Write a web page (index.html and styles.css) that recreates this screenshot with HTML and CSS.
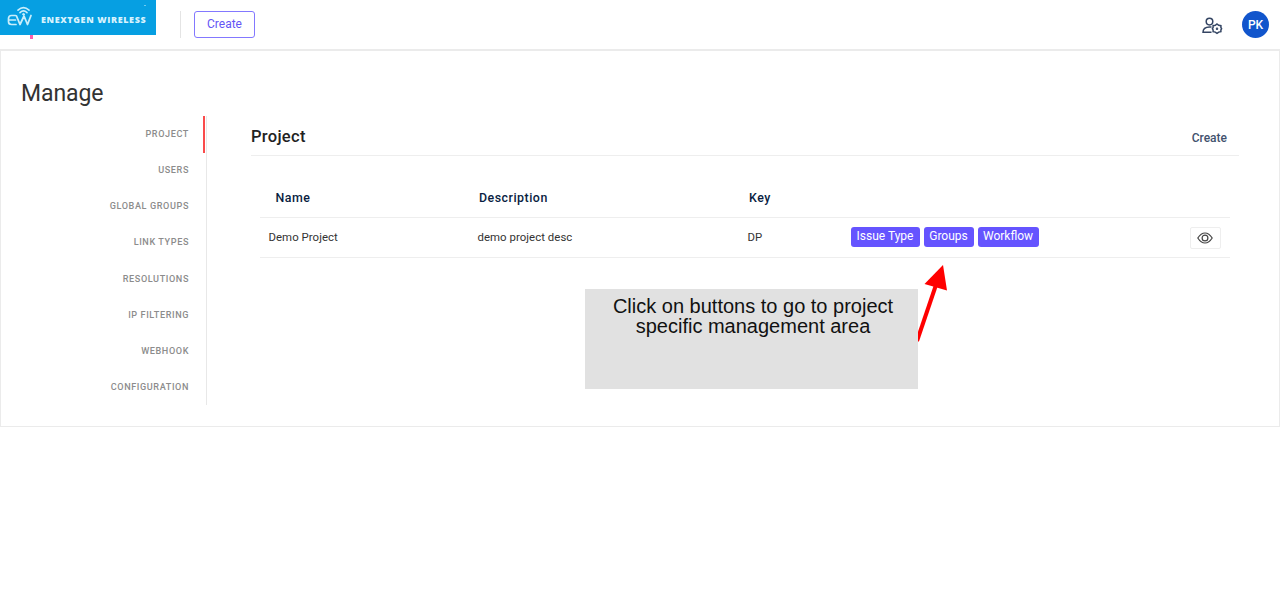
FILE: index.html
```html
<!DOCTYPE html>
<html lang="en">
<head>
<meta charset="utf-8">
<title>Manage projects</title>
<link rel="stylesheet" href="styles.css">
</head>
<body>
<header class="topbar">
  <div class="brand">
    <svg class="brand-mark" width="28" height="22" viewBox="0 0 28 22" fill="none" stroke="#c9eefb" stroke-linecap="round" stroke-linejoin="round">
      <path stroke-width="1.7" d="M8.500 9.500H4.500Q1.500 9.500 1.500 12.500V15.500Q1.500 18.500 4.500 18.500H9M1.500 14H8.500"/>
      <path stroke-width="1.8" d="M9.500 10L13 18.500L17 10L20.500 18.500L24 9.500"/>
      <path stroke-width="1.6" d="M11 4.200Q16.500 -.8 22 4.200M13 6.600Q16.500 3.200 20 6.600"/>
      <circle cx="16.500" cy="8.300" r=".9" fill="#c9eefb"/>
    </svg>
    <span class="brand-name">ENEXTGEN WIRELESS</span>
    <i class="brand-dot"></i>
    <i class="brand-tail"></i>
  </div>
  <div class="divider"></div>
  <button class="create-btn">Create</button>
  <div class="tools">
    <svg class="user-cog" width="22" height="18" viewBox="0 0 22 18" fill="none" stroke="#344563" stroke-width="1.5">
      <circle cx="7.500" cy="4.600" r="3.300"/>
      <path d="M9.500 15.300H1C1 11.800 3.500 10 7.500 10H9.500"/>
      <path d="M15 7L16.700 8.300L18.900 8.700L18.900 10.500L19.600 11.700L18.900 12.900L18.900 14.700L16.700 15.100L15 16.400L13.300 15.100L11.100 14.700L11.100 12.900L10.400 11.700L11.100 10.500L11.100 8.700L13.300 8.300Z"/>
      <circle cx="15" cy="11.700" r=".5"/>
    </svg>
    <span class="avatar">PK</span>
  </div>
</header>
<main class="panel">
  <h1 class="title">Manage</h1>
  <div class="columns">
    <nav class="menu">
      <a class="menu-item active">PROJECT</a>
      <a class="menu-item">USERS</a>
      <a class="menu-item">GLOBAL GROUPS</a>
      <a class="menu-item">LINK TYPES</a>
      <a class="menu-item">RESOLUTIONS</a>
      <a class="menu-item">IP FILTERING</a>
      <a class="menu-item">WEBHOOK</a>
      <a class="menu-item">CONFIGURATION</a>
    </nav>
    <section class="content">
      <div class="content-head">
        <h2 class="heading">Project</h2>
        <a class="create-link">Create</a>
      </div>
      <div class="table">
        <div class="row head">
          <span>Name</span><span>Description</span><span>Key</span>
        </div>
        <div class="row">
          <span>Demo Project</span><span>demo project desc</span><span>DP</span>
          <div class="tags">
            <button class="tag issue">Issue Type</button>
            <button class="tag groups">Groups</button>
            <button class="tag workflow">Workflow</button>
          </div>
          <button class="view">
            <svg width="16" height="12" viewBox="0 0 16 12" fill="none" stroke="#444" stroke-width="1.2">
              <path d="M.8 6Q4 1 8 1T15.200 6Q12 11 8 11T.8 6Z"/>
              <circle cx="8" cy="6" r="2.900"/>
            </svg>
          </button>
        </div>
      </div>
    </section>
  </div>
</main>
<svg class="arrow" width="40" height="84" viewBox="0 0 40 84">
  <path d="M-1 76L19 17" stroke="#f00" stroke-width="4"/>
  <path d="M25 0L6.500 19L29 25.500Z" fill="#f00"/>
</svg>
<div class="callout">Click on buttons to go to project<br>specific management area</div>
</body>
</html>
```
FILE: styles.css
```css
* { box-sizing: border-box; }
body { margin: 0; height: 605px; overflow: hidden; background: #fff; font-family: Roboto, sans-serif; color: #333; }
button { font-family: inherit; padding: 0; }
h1, h2 { margin: 0; }
.topbar { display: flex; height: 51px; border-bottom: 2px solid #ebebeb; }
.brand { position: relative; width: 156px; height: 35px; padding: 7px 0 0 7px; background: #069fe2; display: flex; }
.brand-mark { margin-top: -1px; }
.brand-name { margin-left: 6px; font: 800 9px/12px "Open Sans", sans-serif; letter-spacing: .62px; padding-top: 7px; color: #d9f3fd; white-space: nowrap; }
.brand-dot { position: absolute; left: 144px; top: 5px; width: 2px; height: 1px; background: #6fcbf0; }
.brand-tail { position: absolute; left: 30px; top: 35px; width: 3px; height: 4px; background: #ff5fae; }
.divider { width: 1px; height: 27px; margin: 11px 13px 0 24px; background: #e4e4e4; }
.create-btn { width: 61px; height: 27px; margin-top: 11px; border: 1px solid #8378ff; border-radius: 3px; background: #fff; color: #6455f5; font-size: 12px; line-height: 25px; }
.tools { display: flex; margin-left: auto; padding: 11px 11px 0 0; gap: 18px; }
.user-cog { margin-top: 6px; }
.avatar { width: 27px; height: 27px; border-radius: 50%; background: #1155cc; color: #fff; font-size: 12px; font-weight: 500; line-height: 28px; text-align: center; }
.panel { height: 376px; border: 1px solid #ebebeb; border-top: 0; }
.title { padding: 29px 0 0 20px; height: 65px; font-size: 23px; line-height: 28px; font-weight: 400; letter-spacing: -.1px; }
.columns { display: flex; }
.menu { width: 206px; height: 289px; border-right: 1px solid #e8e8e8; }
.menu-item { display: block; height: 36.130px; padding-right: 17px; text-align: right; font-size: 9.1px; font-weight: 500; letter-spacing: .6px; line-height: 37.500px; color: #8c8c8c; }
.menu-item.active { width: 204px; height: 37px; margin-bottom: -.87px; border-right: 2px solid #fa4b4b; padding-right: 14px; }
.content { width: 988px; margin-left: 44px; }
.content-head { display: flex; justify-content: space-between; height: 40px; border-bottom: 1px solid #eee; padding-right: 12px; }
.heading { font-size: 16.500px; line-height: 41px; font-weight: 500; letter-spacing: .3px; color: #222; }
.create-link { font-size: 12px; line-height: 44px; font-weight: 500; color: #42526e; }
.table { width: 970px; margin: 22px 0 0 9px; font-size: 11.400px; }
.row { display: grid; grid-template-columns: 209px 270px 103px 339px 1fr; height: 40px; padding-left: 8.500px; border-bottom: 1px solid #eee; line-height: 39px; letter-spacing: .05px; }
.head { grid-template-columns: 203.500px 270px 1fr; padding-left: 15.500px; font-size: 12.400px; font-weight: 500; color: #091e42; letter-spacing: .5px; }
.tags { display: flex; gap: 4px; padding-top: 9px; }
.tag { height: 20px; border: 0; border-radius: 3px; background: #6554ff; color: #fff; font-size: 12px; line-height: 18px; padding-bottom: 2px; }
.issue { width: 69px; } .groups { width: 50px; } .workflow { width: 61px; }
.view { width: 31px; height: 22px; margin-top: 9px; border: 1px solid #eee; border-radius: 2px; background: #fff; display: grid; place-items: center; }
.arrow { position: absolute; left: 918px; top: 265px; }
.callout { position: absolute; left: 585px; top: 289px; width: 333px; height: 100px; padding: 7px 0 0 3px; background: #e1e1e1; color: #111; text-align: center; font: 20px/20px "Liberation Sans", sans-serif; white-space: nowrap; }
```
